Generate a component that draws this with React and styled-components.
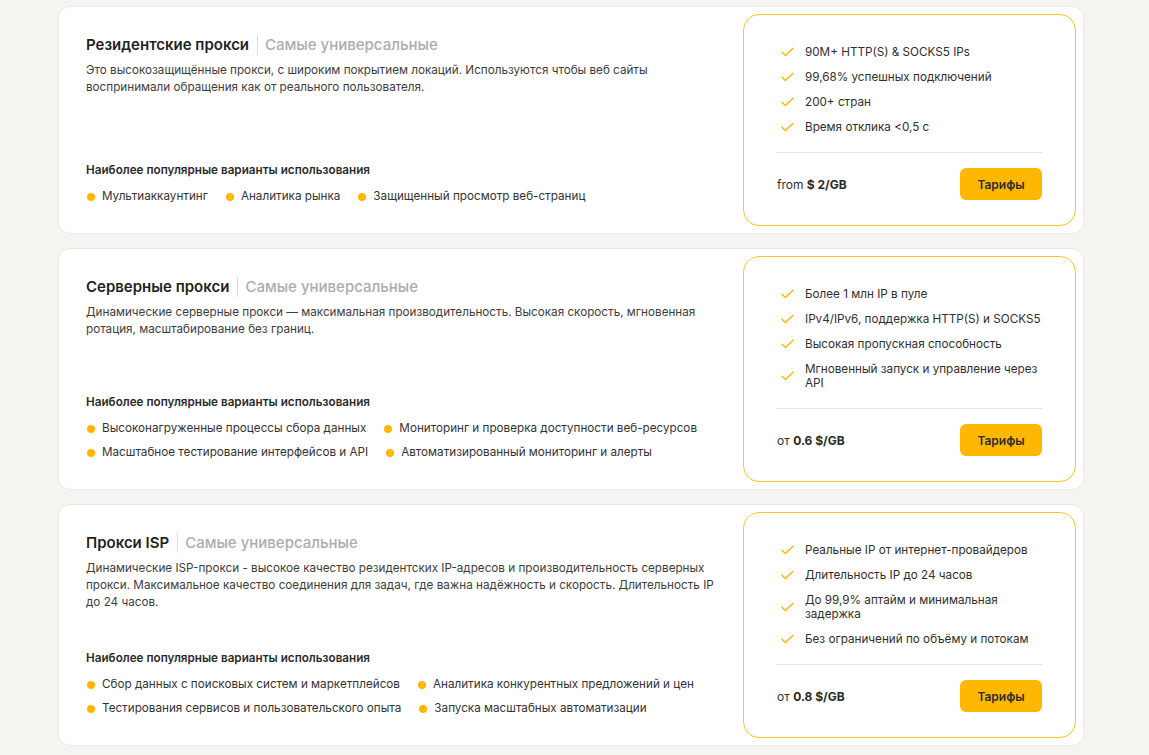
import React from 'react';
import styled, { createGlobalStyle } from 'styled-components';

const GlobalStyle = createGlobalStyle`
  html, body {
    margin: 0;
    padding: 0;
    background: #f5f4f1;
  }
  body {
    font-family: Inter, "Noto Sans", "Liberation Sans", sans-serif;
    color: #2b2b2b;
    -webkit-font-smoothing: antialiased;
  }
  * {
    box-sizing: border-box;
  }
`;

const Page = styled.div`
  display: flex;
  flex-direction: column;
  gap: 14px;
  width: 1026px;
  margin-left: 58px;
  padding: 6px 0 10px;
`;

const Card = styled.section`
  display: flex;
  gap: 28px;
  padding: 7px;
  background: #fff;
  border: 1px solid #e9e8e5;
  border-radius: 12px;
`;

const Info = styled.div`
  flex: 1;
  display: flex;
  flex-direction: column;
  justify-content: space-between;
  padding: 21px 0 22px 20px;
`;

const TitleRow = styled.div`
  display: flex;
  align-items: center;
  height: 20px;
  font-size: 15px;
  line-height: 20px;
`;

const Title = styled.h2`
  margin: 0;
  font-size: 15px;
  font-weight: 600;
  color: #1f1f1f;
`;

const Divider = styled.span`
  width: 1px;
  height: 20px;
  margin: 0 7px 0 8px;
  background: #dcdcdc;
`;

const Tag = styled.span`
  font-weight: 500;
  color: #acacac;
`;

const Description = styled.p`
  margin: 7px 0 0;
  max-width: 630px;
  font-size: 11.7px;
  line-height: 17px;
  color: #3d3d3d;
`;

const UsesTitle = styled.h3`
  margin: 0 0 11px;
  font-size: 11.7px;
  line-height: 15px;
  font-weight: 600;
  color: #2b2b2b;
`;

const Uses = styled.ul`
  display: flex;
  flex-wrap: wrap;
  gap: 9px 17px;
  margin: 0;
  padding: 0;
  list-style: none;
`;

const Use = styled.li`
  display: flex;
  align-items: center;
  gap: 7px;
  padding-left: 1px;
  font-size: 11.7px;
  line-height: 15px;
  color: #333;

  &::before {
    content: '';
    width: 8px;
    height: 8px;
    border-radius: 50%;
    background: #ffb800;
    flex: none;
  }
`;

const Panel = styled.div`
  flex: none;
  display: flex;
  flex-direction: column;
  width: 333px;
  padding: 30px 33px 25px;
  border: 1px solid #ffc425;
  border-radius: 16px;
`;

const Features = styled.ul`
  display: flex;
  flex-direction: column;
  gap: 11px;
  margin: 0;
  padding: 0 0 18px;
  list-style: none;
  border-bottom: 1px solid #e4e4e4;
`;

const Feature = styled.li`
  display: flex;
  align-items: center;
  gap: 11px;
  font-size: 11.7px;
  line-height: 14px;
  color: #2f2f2f;

  svg {
    flex: none;
    margin-left: 4px;
  }
`;

const PriceRow = styled.div`
  display: flex;
  align-items: center;
  justify-content: space-between;
  margin-top: 15px;
`;

const Price = styled.span`
  font-size: 12px;
  color: #333;

  b {
    font-weight: 700;
    color: #2a2a2a;
  }
`;

const Button = styled.button`
  width: 82px;
  height: 32px;
  border: none;
  border-radius: 6px;
  background: #ffb800;
  font-family: inherit;
  font-size: 12px;
  font-weight: 600;
  color: #2d2d2d;
  cursor: pointer;
`;

const Check = () => (
  <svg width="13" height="10" viewBox="0 0 13 10" fill="none">
    <path d="M1 5.2 4.4 8.5 12 1.2" stroke="#ffb800" strokeWidth="1.4" strokeLinecap="round" strokeLinejoin="round" />
  </svg>
);

const products = [
  {
    title: 'Резидентские прокси',
    description: 'Это высокозащищённые прокси, с широким покрытием локаций. Используются чтобы веб сайты воспринимали обращения как от реального пользователя.',
    uses: ['Мультиаккаунтинг', 'Аналитика рынка', 'Защищенный просмотр веб-страниц'],
    features: ['90M+ HTTP(S) & SOCKS5 IPs', '99,68% успешных подключений', '200+ стран', 'Время отклика <0,5 с'],
    prefix: 'from',
    price: '$ 2/GB',
  },
  {
    title: 'Серверные прокси',
    description: 'Динамические серверные прокси — максимальная производительность. Высокая скорость, мгновенная ротация, масштабирование без границ.',
    uses: [
      'Высоконагруженные процессы сбора данных',
      'Мониторинг и проверка доступности веб-ресурсов',
      'Масштабное тестирование интерфейсов и API',
      'Автоматизированный мониторинг и алерты',
    ],
    features: ['Более 1 млн IP в пуле', 'IPv4/IPv6, поддержка HTTP(S) и SOCKS5', 'Высокая пропускная способность', 'Мгновенный запуск и управление через API'],
    prefix: 'от',
    price: '0.6 $/GB',
  },
  {
    title: 'Прокси ISP',
    description: 'Динамические ISP-прокси - высокое качество резидентских IP-адресов и производительность серверных прокси. Максимальное качество соединения для задач, где важна надёжность и скорость. Длительность IP до 24 часов.',
    uses: [
      'Сбор данных с поисковых систем и маркетплейсов',
      'Аналитика конкурентных предложений и цен',
      'Тестирования сервисов и пользовательского опыта',
      'Запуска масштабных автоматизации',
    ],
    features: ['Реальные IP от интернет-провайдеров', 'Длительность IP до 24 часов', 'До 99,9% аптайм и минимальная задержка', 'Без ограничений по объёму и потокам'],
    prefix: 'от',
    price: '0.8 $/GB',
  },
];

const ProductCard = ({ product }) => (
  <Card>
    <Info>
      <div>
        <TitleRow>
          <Title>{product.title}</Title>
          <Divider />
          <Tag>Самые универсальные</Tag>
        </TitleRow>
        <Description>{product.description}</Description>
      </div>
      <div>
        <UsesTitle>Наиболее популярные варианты использования</UsesTitle>
        <Uses>
          {product.uses.map((u) => (
            <Use key={u}>{u}</Use>
          ))}
        </Uses>
      </div>
    </Info>
    <Panel>
      <Features>
        {product.features.map((f) => (
          <Feature key={f}>
            <Check />
            <span>{f}</span>
          </Feature>
        ))}
      </Features>
      <PriceRow>
        <Price>
          {product.prefix} <b>{product.price}</b>
        </Price>
        <Button>Тарифы</Button>
      </PriceRow>
    </Panel>
  </Card>
);

const App = () => (
  <>
    <GlobalStyle />
    <Page>
      {products.map((p) => (
        <ProductCard key={p.title} product={p} />
      ))}
    </Page>
  </>
);

export default App;
